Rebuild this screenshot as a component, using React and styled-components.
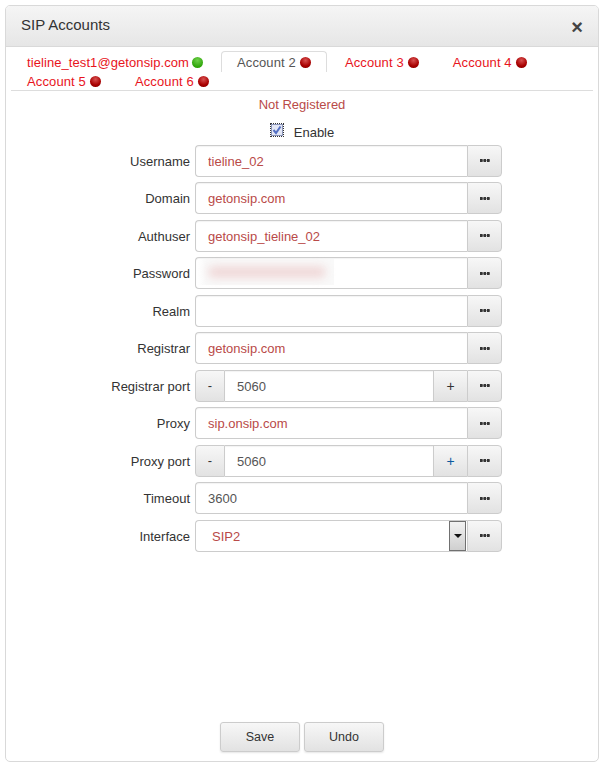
import React from 'react';
import styled, { createGlobalStyle } from 'styled-components';

const GlobalStyle = createGlobalStyle`
  html, body {
    margin: 0;
    padding: 0;
    background: #fff;
  }
  body {
    font-family: "Liberation Sans", Arial, sans-serif;
    font-size: 13px;
    color: #333;
  }
  * {
    box-sizing: border-box;
  }
`;

const accounts = [
  { name: 'tieline_test1@getonsip.com', online: true, tight: true },
  { name: 'Account 2', active: true },
  { name: 'Account 3' },
  { name: 'Account 4' },
  { name: 'Account 5' },
  { name: 'Account 6' },
];

const fields = [
  { label: 'Username', value: 'tieline_02' },
  { label: 'Domain', value: 'getonsip.com' },
  { label: 'Authuser', value: 'getonsip_tieline_02' },
  { label: 'Password', blurred: true },
  { label: 'Realm', value: '' },
  { label: 'Registrar', value: 'getonsip.com' },
  { label: 'Registrar port', value: '5060', spinner: true },
  { label: 'Proxy', value: 'sip.onsip.com' },
  { label: 'Proxy port', value: '5060', spinner: true, plusBlue: true },
  { label: 'Timeout', value: '3600', plain: true },
];

const App = () => {
  return (
    <>
      <GlobalStyle />
      <Page>
        <Modal>
          <Header>
            <Title>SIP Accounts</Title>
            <Close>×</Close>
          </Header>
          <Body>
            <Tabs>
              {accounts.map((a) => (
                <Tab key={a.name} $active={a.active} $tight={a.tight}>
                  {a.name}
                  <Dot $online={a.online} />
                </Tab>
              ))}
            </Tabs>
            <Status>Not Registered</Status>
            <EnableRow>
              <CheckFrame>
                <svg width="14" height="14" viewBox="0 0 14 14">
                  <rect x="1.5" y="1.5" width="11" height="11" fill="#e3e7f5" stroke="#8a94b8" />
                  <path d="M3.5 7 L6 10 L10.5 3.5" fill="none" stroke="#5470c4" strokeWidth="2" />
                </svg>
              </CheckFrame>
              <span>Enable</span>
            </EnableRow>
            <Form>
              {fields.map((f) => (
                <Row key={f.label}>
                  <Label>{f.label}</Label>
                  <Group>
                    {f.spinner && <SpinLeft>-</SpinLeft>}
                    <Field $spinner={f.spinner} $plain={f.plain || f.spinner} value={f.value || ''} readOnly={!f.blurred} />
                    {f.blurred && <Blur><BlurLine /></Blur>}
                    {f.spinner && <SpinRight $blue={f.plusBlue}>+</SpinRight>}
                    <More><Dots /></More>
                  </Group>
                </Row>
              ))}
              <Row>
                <Label>Interface</Label>
                <Group>
                  <SelectBox>
                    SIP2
                    <SelectArrow />
                  </SelectBox>
                  <More><Dots /></More>
                </Group>
              </Row>
            </Form>
          </Body>
          <Footer>
            <FooterButton>Save</FooterButton>
            <FooterButton>Undo</FooterButton>
          </Footer>
        </Modal>
      </Page>
    </>
  );
};

export default App;

const Page = styled.div`
  width: 604px;
  height: 766px;
  padding: 5px 5px 4px 5px;
`;

const Modal = styled.div`
  width: 594px;
  height: 757px;
  display: flex;
  flex-direction: column;
  border: 1px solid #d9d9d9;
  border-radius: 5px;
  overflow: hidden;
`;

const Header = styled.div`
  height: 41px;
  flex: none;
  display: flex;
  align-items: center;
  justify-content: space-between;
  padding: 0 15px;
  background: linear-gradient(to bottom, #f5f5f5, #e6e6e6);
  border-bottom: 1px solid #d9d9d9;
`;

const Title = styled.div`
  font-size: 15px;
  color: #333;
  margin-top: -4px;
`;

const Close = styled.div`
  font-size: 20px;
  font-weight: bold;
  color: #444;
  line-height: 20px;
  margin-top: 2px;
`;

const Body = styled.div`
  flex: 1;
  padding: 4px 5px 0 5px;
`;

const Tabs = styled.div`
  display: flex;
  flex-wrap: wrap;
  column-gap: 2px;
  padding-bottom: 1px;
  border-bottom: 1px solid #ddd;
`;

const Tab = styled.div`
  display: flex;
  align-items: center;
  height: 21px;
  margin-bottom: -2px;
  padding: 0 15px;
  letter-spacing: ${(p) => (p.$tight ? '0.08px' : '0.12px')};
  border: 1px solid ${(p) => (p.$active ? '#ddd' : 'transparent')};
  border-bottom: none;
  border-radius: 4px 4px 0 0;
  background: ${(p) => (p.$active ? '#fff' : 'transparent')};
  color: ${(p) => (p.$active ? '#555' : '#e8141c')};
  position: relative;
  z-index: ${(p) => (p.$active ? 1 : 0)};
`;

const Dot = styled.span`
  width: 11px;
  height: 11px;
  margin-left: ${(p) => (p.$online ? '3px' : '4px')};
  border-radius: 50%;
  background: ${(p) =>
    p.$online
      ? 'radial-gradient(circle at 50% 30%, #6fd04a, #2fa50a 70%)'
      : 'radial-gradient(circle at 50% 30%, #d85050, #a80000 60%, #800000)'};
`;

const Status = styled.div`
  margin-top: 6px;
  text-align: center;
  color: #b94a48;
  line-height: 16px;
`;

const EnableRow = styled.div`
  margin-top: 10px;
  display: flex;
  align-items: center;
  justify-content: center;
  gap: 10px;
  height: 18px;
`;

const CheckFrame = styled.span`
  display: block;
  width: 14px;
  height: 14px;
  outline: 1px dotted #333;
  outline-offset: -1px;
  margin-top: -4px;
  line-height: 0;
`;

const Form = styled.div`
  margin-top: 3.75px;
  display: flex;
  flex-direction: column;
  gap: 5.5px;
`;

const Row = styled.div`
  display: flex;
  align-items: center;
  height: 32px;
`;

const Label = styled.div`
  width: 184px;
  padding: 1px 5px 0 0;
  flex: none;
  text-align: right;
`;

const Group = styled.div`
  position: relative;
  display: flex;
  width: 307px;
  height: 32px;
`;

const Field = styled.input`
  flex: 1;
  min-width: 0;
  height: 32px;
  padding: 1px 12px 0;
  font: inherit;
  color: ${(p) => (p.$plain ? '#555' : '#b94a48')};
  background: #fff;
  border: 1px solid #ccc;
  border-right: none;
  border-left: ${(p) => (p.$spinner ? 'none' : '1px solid #ccc')};
  border-radius: ${(p) => (p.$spinner ? '0' : '4px 0 0 4px')};
  box-shadow: inset 0 1px 1px rgba(0, 0, 0, 0.05);
  outline: none;
`;

const buttonFace = `
  background: linear-gradient(to bottom, #f7f7f7, #e2e2e2);
  border: 1px solid #ccc;
  display: flex;
  align-items: center;
  justify-content: center;
`;

const SpinLeft = styled.div`
  ${buttonFace}
  width: 30px;
  flex: none;
  border-radius: 4px 0 0 4px;
  color: #333;
`;

const SpinRight = styled.div`
  ${buttonFace}
  width: 34px;
  flex: none;
  border-right: none;
  font-size: 14px;
  color: ${(p) => (p.$blue ? '#0b5a9e' : '#333')};
`;

const More = styled.div`
  ${buttonFace}
  width: 35px;
  flex: none;
  border-radius: 0 4px 4px 0;
`;

const Dots = styled.span`
  display: block;
  width: 10px;
  height: 3px;
  background: radial-gradient(circle at 1.5px 1.5px, #333 1.5px, transparent 1.6px) 0 0 / 3.5px 3px repeat-x;
`;

const Blur = styled.div`
  position: absolute;
  left: 3px;
  top: 2px;
  width: 136px;
  height: 26px;
  display: flex;
  align-items: center;
  justify-content: center;
  background: linear-gradient(to right, #fff, #f9f9f9 6%, #f9f9f9);
  padding-left: 2px;
`;

const BlurLine = styled.div`
  width: 118px;
  height: 12px;
  border-radius: 6px;
  background: #f0d9d9;
  filter: blur(4px);
`;

const SelectBox = styled.div`
  flex: 1;
  position: relative;
  display: flex;
  align-items: center;
  padding: 1px 0 0 16px;
  color: #b94a48;
  background: #fff;
  border: 1px solid #ccc;
  border-right: none;
  border-radius: 4px 0 0 4px;
`;

const SelectArrow = styled.span`
  position: absolute;
  right: 1px;
  top: 0;
  width: 17px;
  height: 30px;
  border: 1px solid #707070;
  background: linear-gradient(to bottom, #f2f2f2, #cfcfcf);
  &::after {
    content: '';
    position: absolute;
    left: 3.5px;
    top: 12px;
    border-left: 4px solid transparent;
    border-right: 4px solid transparent;
    border-top: 4px solid #111;
  }
`;

const Footer = styled.div`
  flex: none;
  display: flex;
  justify-content: center;
  gap: 4px;
  padding-bottom: 9px;
  font-size: 12.5px;
`;

const FooterButton = styled.div`
  ${buttonFace}
  width: 80px;
  height: 30px;
  border-radius: 3px;
  box-shadow: 0 1px 2px rgba(0, 0, 0, 0.1);
`;
